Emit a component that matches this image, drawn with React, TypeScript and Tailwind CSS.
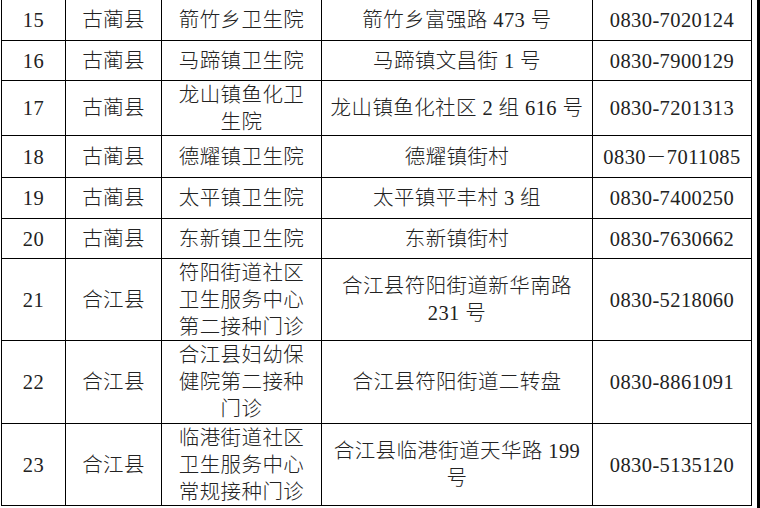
const rows: { h: string; cells: string[][] }[] = [
  { h: "h-[41px]", cells: [["15"], ["古蔺县"], ["箭竹乡卫生院"], ["箭竹乡富强路 473 号"], ["0830-7020124"]] },
  { h: "h-[40px]", cells: [["16"], ["古蔺县"], ["马蹄镇卫生院"], ["马蹄镇文昌街 1 号"], ["0830-7900129"]] },
  { h: "h-[55px]", cells: [["17"], ["古蔺县"], ["龙山镇鱼化卫", "生院"], ["龙山镇鱼化社区 2 组 616 号"], ["0830-7201313"]] },
  { h: "h-[42px]", cells: [["18"], ["古蔺县"], ["德耀镇卫生院"], ["德耀镇街村"], ["0830－7011085"]] },
  { h: "h-[41px]", cells: [["19"], ["古蔺县"], ["太平镇卫生院"], ["太平镇平丰村 3 组"], ["0830-7400250"]] },
  { h: "h-[40px]", cells: [["20"], ["古蔺县"], ["东新镇卫生院"], ["东新镇街村"], ["0830-7630662"]] },
  {
    h: "h-[82px]",
    cells: [["21"], ["合江县"], ["符阳街道社区", "卫生服务中心", "第二接种门诊"], ["合江县符阳街道新华南路", "231 号"], ["0830-5218060"]],
  },
  {
    h: "h-[83px]",
    cells: [["22"], ["合江县"], ["合江县妇幼保", "健院第二接种", "门诊"], ["合江县符阳街道二转盘"], ["0830-8861091"]],
  },
  {
    h: "h-[82px]",
    cells: [["23"], ["合江县"], ["临港街道社区", "卫生服务中心", "常规接种门诊"], ["合江县临港街道天华路 199", "号"], ["0830-5135120"]],
  },
];

const widths = ["w-[65px] border-l", "w-[96px]", "w-[160px]", "w-[271px]", "w-[159px]"];

export default function App() {
  return (
    <div className="flex h-[508px] w-[760px] overflow-hidden bg-white pl-[1px] font-light text-[#222] [font-family:'Liberation_Serif','Noto_Sans_CJK_SC',serif]">
      <div className="flex w-[752px] flex-col">
        {rows.map((row, i) => (
          <div key={i} className={`flex ${row.h}`}>
            {row.cells.map((lines, j) => (
              <div
                key={j}
                className={`${widths[j]} flex shrink-0 flex-col items-center justify-center border-r border-b border-black pt-[1px] text-center text-[20.5px] leading-[27px] tracking-[0.4px]`}
              >
                {lines.map((line, k) => (
                  <span key={k} className="whitespace-nowrap">
                    {line}
                  </span>
                ))}
              </div>
            ))}
          </div>
        ))}
      </div>
      <div className="ml-auto w-[3px] bg-black" />
    </div>
  );
}
